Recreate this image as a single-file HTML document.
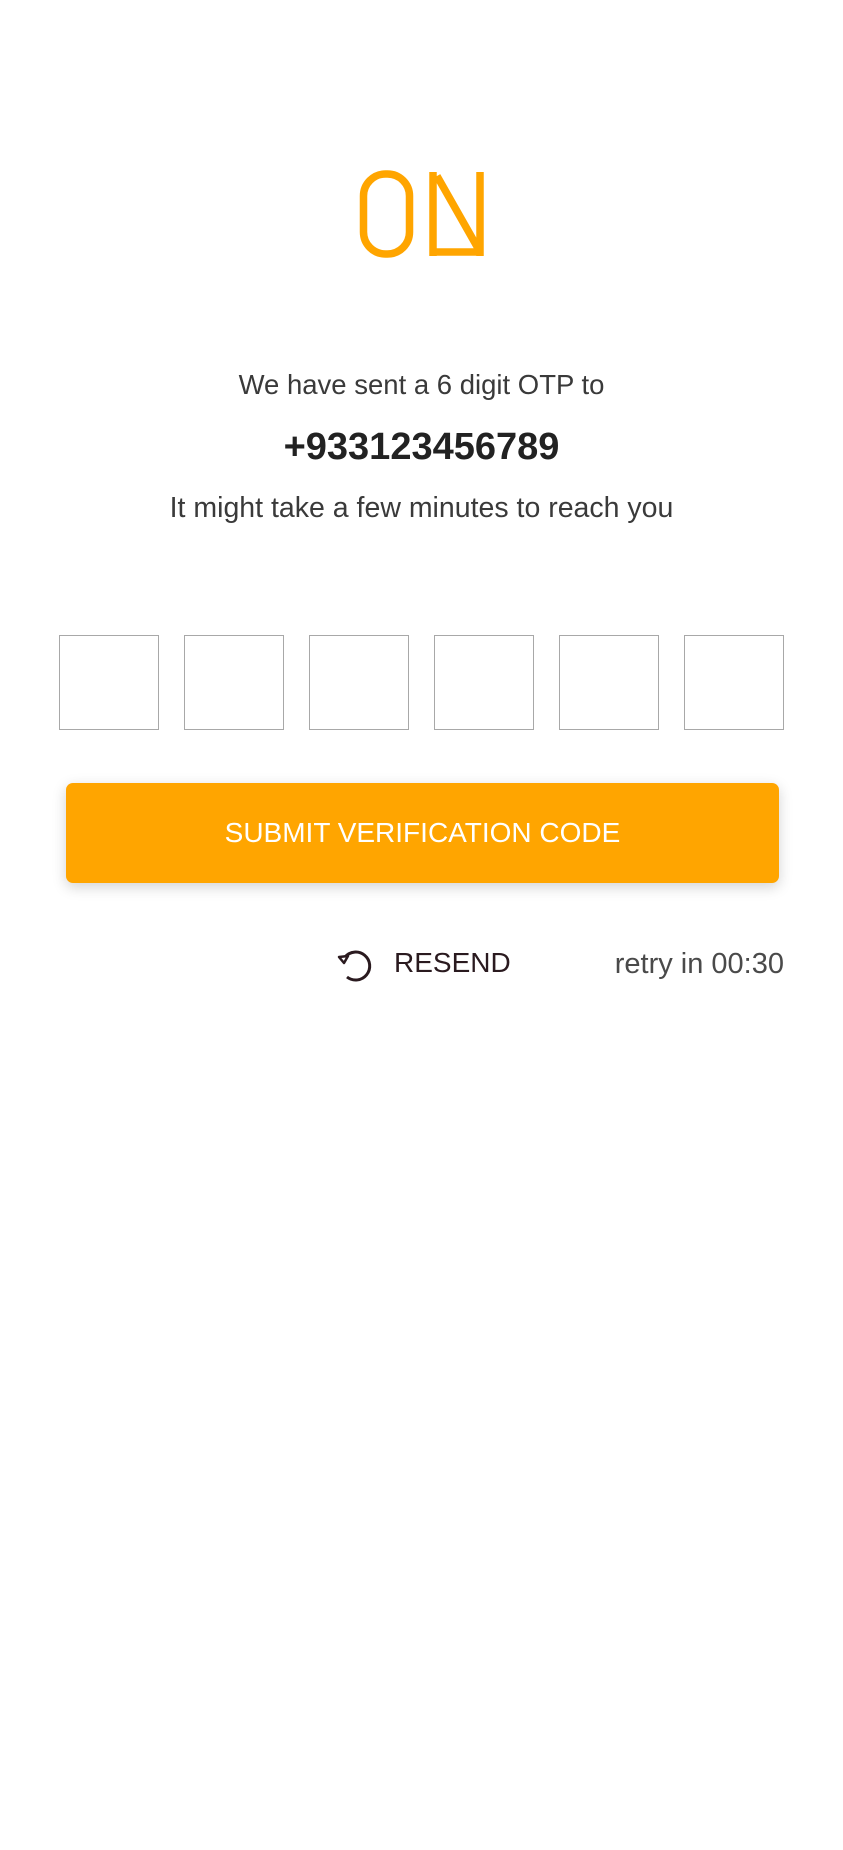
<!DOCTYPE html>
<html><head><meta charset="utf-8"><style>
html,body{margin:0;padding:0;background:#fff;}
body{width:843px;height:1850px;position:relative;overflow:hidden;font-family:"Liberation Sans",sans-serif;}
.t{position:absolute;left:0;width:843px;text-align:center;color:#3a3a3a;}
.box{position:absolute;top:635px;width:98px;height:93px;border:1px solid #a8a8a8;}
.btn{position:absolute;left:66px;top:783px;width:713px;height:100px;background:#FFA500;border-radius:7px;box-shadow:0 4px 14px rgba(0,0,0,0.18);color:#fff;font-size:28px;text-align:center;line-height:100px;}
</style></head><body>
<svg style="position:absolute;left:355px;top:168px" width="135" height="95" viewBox="0 0 135 95">
<rect x="8.5" y="6" width="46" height="80" rx="22" fill="none" stroke="#FFA500" stroke-width="7.5"/>
<path d="M78 4 V88 M82 8 L124 82 M80 84 H128 M125 4 V88" fill="none" stroke="#FFA500" stroke-width="7.5"/>
</svg>
<div class="t" style="top:369px;font-size:27.5px;">We have sent a 6 digit OTP to</div>
<div class="t" style="top:426px;font-size:38px;font-weight:bold;color:#222;">+933123456789</div>
<div class="t" style="top:492px;font-size:28.5px;">It might take a few minutes to reach you</div>
<div class="box" style="left:59px"></div>
<div class="box" style="left:184px"></div>
<div class="box" style="left:309px"></div>
<div class="box" style="left:434px"></div>
<div class="box" style="left:559px"></div>
<div class="box" style="left:684px"></div>
<div class="btn">SUBMIT VERIFICATION CODE</div>
<svg style="position:absolute;left:335px;top:945px" width="42" height="40" viewBox="0 0 42 40">
<path d="M10 12 A14 14 0 1 1 12 32" fill="none" stroke="#2a1a1f" stroke-width="3"/>
<path d="M4 12 L13 11 L9 18 Z" fill="none" stroke="#2a1a1f" stroke-width="2.5" stroke-linejoin="round"/>
</svg>
<div style="position:absolute;left:394px;top:947px;font-size:28px;color:#2a1a1f;">RESEND</div>
<div style="position:absolute;left:584px;top:948px;width:200px;text-align:right;font-size:29px;color:#4a4a4a;">retry in 00:30</div>
</body></html>
